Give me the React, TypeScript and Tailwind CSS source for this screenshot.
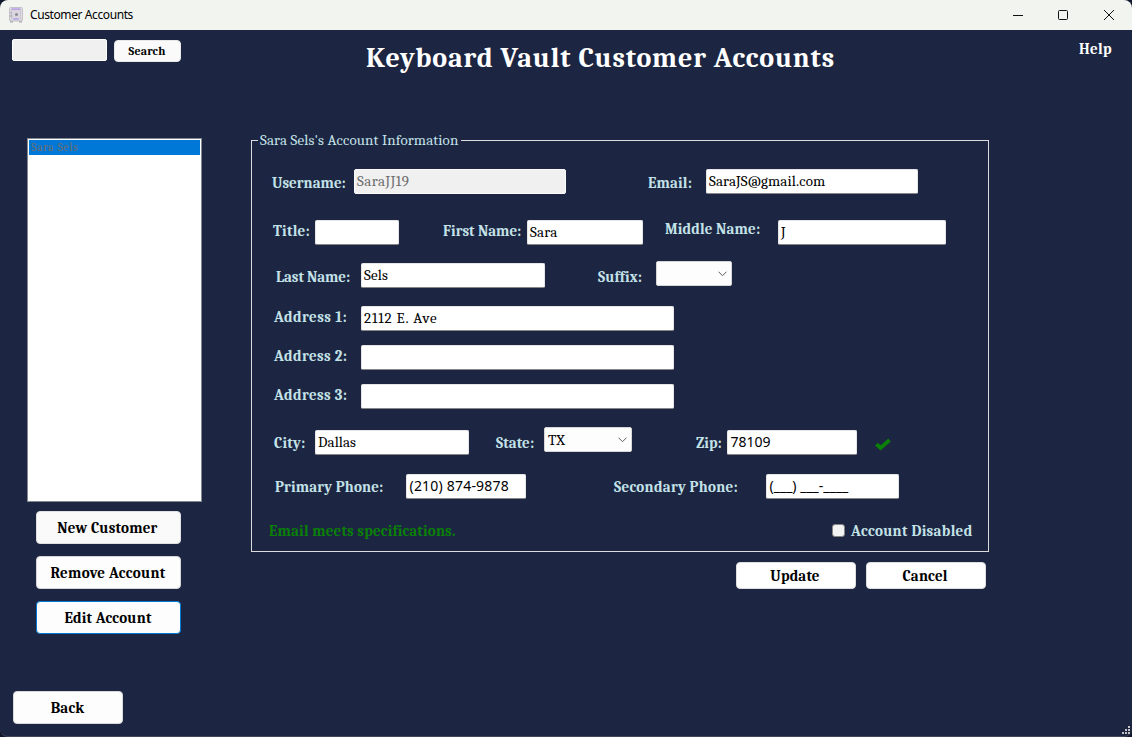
import type { ReactNode } from "react";

const Label = ({ className, children }: { className: string; children: ReactNode }) => (
  <label className={`block shrink-0 whitespace-nowrap text-[15px] leading-[21px] font-bold text-[#c3e2e8] ${className}`}>
    {children}
  </label>
);

const Box = ({
  className = "",
  disabled = false,
  masked = false,
  children,
}: {
  className?: string;
  disabled?: boolean;
  masked?: boolean;
  children?: ReactNode;
}) => (
  <div
    className={`h-[25px] shrink-0 whitespace-nowrap rounded-[2px] border ${
      disabled ? "border-[#fbfbfb] bg-[#f0f0f0] text-[#6d6d6d]" : "border-[#e6e6e6] border-b-[#868686] bg-white text-black"
    } ${
      masked ? "pl-[2.5px] font-['Noto_Sans',sans-serif] text-[14px] leading-[21px]" : "pl-[2px] text-[15px] leading-[23px]"
    } ${className}`}
  >
    {children}
  </div>
);

const Select = ({ className = "", children }: { className?: string; children?: ReactNode }) => (
  <div
    className={`flex h-[25px] shrink-0 items-center justify-between rounded-[2px] border border-[#d6d6d6] bg-[#fdfdfd] pl-[3px] pr-1 text-[15px] leading-[23px] text-black ${className}`}
  >
    <span className="pt-px">{children}</span>
    <svg width="9" height="6" viewBox="0 0 9 6" fill="none" stroke="#5c5c5c" strokeWidth="1">
      <path d="M0.5 0.7 4.5 4.7 8.5 0.7" />
    </svg>
  </div>
);

const Button = ({ className, children }: { className: string; children: ReactNode }) => (
  <button
    className={`flex shrink-0 items-center justify-center whitespace-nowrap rounded-[4px] border font-bold text-black ${className}`}
  >
    {children}
  </button>
);

export default function App() {
  return (
    <div className="h-[737px] w-[1132px] overflow-hidden bg-[#11172b]">
      <div className="flex h-[737px] flex-col overflow-hidden rounded-lg border-b border-[#44485a] bg-[#1c2541] font-['Cambria','Caladea','Liberation_Serif',serif]">
        <header className="flex h-[30px] shrink-0 items-center bg-[#f1f4ef] pl-[9px]">
          <svg width="14" height="16" viewBox="0 0 14 16">
            <rect x="1" y="13" width="3" height="2.5" fill="#aaa7ab" />
            <rect x="10" y="13" width="3" height="2.5" fill="#aaa7ab" />
            <rect x="0.5" y="0.5" width="13" height="13.5" rx="1" fill="#dedbe3" stroke="#c4c2c8" />
            <rect x="2.5" y="2.5" width="9" height="9.5" fill="#d8d5df" stroke="#cbc8d0" />
            <path d="M2.5 2h9M4.500 12h5" stroke="#a98af0" strokeWidth="1.2" />
            <circle cx="7.500" cy="7.500" r="1.500" fill="#8e8a92" />
            <path d="M2 5v1.500M2 8v2" stroke="#96929a" />
          </svg>
          <span className="ml-[7px] text-[12px] leading-4 tracking-[-0.4px] text-black font-['Noto_Sans',sans-serif]">
            Customer Accounts
          </span>
          <div className="ml-auto flex items-center pr-[18px]">
            <svg width="102" height="12" viewBox="0 0 102 12" fill="none" stroke="#111" strokeWidth="1">
              <path d="M1 6.500h10" />
              <rect x="46.500" y="1.500" width="9" height="9" rx="1" />
              <path d="M92 1l10 10M102 1 92 11" />
            </svg>
          </div>
        </header>

        <div className="flex h-[108px] shrink-0 items-start pl-3">
          <div className="mt-[9px] h-[22px] w-[95px] rounded-[2px] border border-white bg-[#f0f0f0]" />
          <Button className="mt-[10px] ml-[7px] h-[22px] w-[67px] border-[#e8e8e8] bg-[#fafafa] pr-px text-[12px] tracking-[0.15px]">
            Search
          </Button>
          <h1 className="mt-[10px] ml-[185px] w-[468px] whitespace-nowrap text-[28px] leading-9 font-bold tracking-[0.87px] text-white">
            Keyboard Vault Customer Accounts
          </h1>
          <span className="mt-[9px] ml-[245px] text-[15px] leading-[21px] font-bold tracking-[0.3px] text-white">Help</span>
        </div>

        <main className="flex shrink-0 items-start pl-[27px]">
          <aside className="flex w-[175px] shrink-0 flex-col">
            <div className="h-[364px] border border-[#828790] bg-white p-px">
              <div className="h-[15px] bg-[#0078d7] pl-[2px] text-[12px] leading-[15px] tracking-[0.5px] text-[#6d6d6d]">
                Sara Sels
              </div>
            </div>
            <Button className="mt-[9px] ml-[9px] h-[33px] w-[145px] border-[#e0e0e0] bg-[#fafafa] pt-[2px] pr-[2px] text-[15px] tracking-[0.2px]">
              New Customer
            </Button>
            <Button className="mt-3 ml-[9px] h-[33px] w-[145px] border-[#d5d5d5] bg-[#fdfdfd] pt-[2px] pr-px text-[15px] tracking-[0.3px]">
              Remove Account
            </Button>
            <Button className="mt-3 ml-[9px] h-[33px] w-[145px] border-[#0078d4] bg-[#fdfdfd] pt-[2px] pr-px text-[15px] tracking-[0.2px]">
              Edit Account
            </Button>
          </aside>

          <section className="ml-[49px] w-[738px]">
            <div className="mt-[2px] h-[412px] border border-[#dcdcdc]">
              <div className="-mt-[11px] ml-[6px] h-[39px]">
                <span className="block w-[203px] whitespace-nowrap bg-[#1c2541] pl-[2px] text-[15px] leading-5 tracking-[0.13px] text-[#c3e2e8]">
                  Sara Sels&apos;s Account Information
                </span>
              </div>
              <div className="flex h-[51px] items-start pl-5">
                <Label className="mt-1 w-[82px]">Username:</Label>
                <Box disabled className="w-[212px] tracking-[0.5px]">SaraJJ19</Box>
                <Label className="mt-1 ml-[82px] w-[58px] tracking-[0.15px]">Email:</Label>
                <Box className="w-[212px] tracking-[0.12px]">SaraJS@gmail.com</Box>
              </div>
              <div className="flex h-[41px] items-start pl-[21px]">
                <Label className="mt-px w-[42px] tracking-[0.25px]">Title:</Label>
                <Box className="w-[84px]" />
                <Label className="mt-px ml-[44px] w-[84px]">First Name:</Label>
                <Box className="w-[116px] tracking-[0.2px]">Sara</Box>
                <Label className="-mt-px ml-[22px] w-[113px] tracking-[0.15px]">Middle Name:</Label>
                <Box className="w-[168px]">J</Box>
              </div>
              <div className="flex h-[45px] items-start pl-6">
                <Label className="mt-[6px] w-[85px] tracking-[-0.08px]">Last Name:</Label>
                <Box className="mt-[2px] w-[184px] tracking-[0.2px]">Sels</Box>
                <Label className="mt-[6px] ml-[53px] w-[58px] tracking-[0.15px]">Suffix:</Label>
                <Select className="w-[76px]" />
              </div>
              <div className="flex h-[39px] items-start pl-[22px]">
                <Label className="mt-px w-[87px] tracking-[0.45px]">Address 1:</Label>
                <Box className="w-[313px] tracking-[0.85px]">2112 E. Ave</Box>
              </div>
              <div className="flex h-[39px] items-start pl-[22px]">
                <Label className="mt-px w-[87px] tracking-[0.4px]">Address 2:</Label>
                <Box className="w-[313px]" />
              </div>
              <div className="flex h-[43px] items-start pl-[22px]">
                <Label className="mt-px w-[87px] tracking-[0.4px]">Address 3:</Label>
                <Box className="w-[313px]" />
              </div>
              <div className="flex h-[47px] items-start pl-[22px]">
                <Label className="mt-[6px] w-[41px] tracking-[0.2px]">City:</Label>
                <Box className="mt-[3px] w-[154px] tracking-[0.1px]">Dallas</Box>
                <Label className="mt-[6px] ml-[27px] w-[48px] tracking-[0.1px]">State:</Label>
                <Select className="w-[88px]">TX</Select>
                <Label className="mt-[6px] ml-[64px] w-[31px]">Zip:</Label>
                <Box masked className="mt-[3px] w-[130px]">78109</Box>
                <svg className="mt-[11px] ml-[18px]" width="16" height="13" viewBox="0 0 16 13" fill="none" stroke="#0a8008" strokeWidth="3.800">
                  <path d="M1.500 6.200 5.500 10 14.600 2" />
                </svg>
              </div>
              <div className="flex h-[47px] items-start pl-[23px]">
                <Label className="mt-[3px] w-[131px] tracking-[0.15px]">Primary Phone:</Label>
                <Box masked className="w-[120px] tracking-[0.2px]">(210) 874-9878</Box>
                <Label className="mt-[3px] ml-[88px] w-[152px] tracking-[0.27px]">Secondary Phone:</Label>
                <Box masked className="w-[133px]">(___) ___-____</Box>
              </div>
              <div className="flex items-start pl-[17px]">
                <span className="w-[563px] text-[15px] leading-[21px] font-bold tracking-[0.16px] text-[#0a8008]">
                  Email meets specifications.
                </span>
                <div className="mt-[3px] h-[13px] w-[13px] rounded-[3px] border border-[#858585] bg-[#f3f3f3]" />
                <Label className="ml-[6px] tracking-[0.32px]">Account Disabled</Label>
              </div>
            </div>
            <div className="mt-[10px] flex justify-end gap-[10px] pr-[3px]">
              <Button className="h-[27px] w-[120px] border-[#dedede] bg-white pt-[2px] pr-[2px] text-[15px] tracking-[0.15px]">Update</Button>
              <Button className="h-[27px] w-[120px] border-[#dedede] bg-white pt-[2px] pr-[2px] text-[15px] tracking-[0.15px]">Cancel</Button>
            </div>
          </section>
        </main>

        <footer className="mt-auto flex shrink-0 items-end justify-between pl-[13px]">
          <Button className="mb-3 h-[33px] w-[110px] border-[#d8d8d8] bg-[#fdfdfd] pt-[2px] pr-px text-[15px] tracking-[0.15px]">Back</Button>
          <svg className="mr-[2px] mb-[2px]" width="8" height="8" viewBox="0 0 8 8" fill="#c4c4c4">
            <path d="M6 0h2v2H6zM3 3h2v2H3zM6 3h2v2H6zM0 6h2v2H0zM3 6h2v2H3zM6 6h2v2H6z" />
          </svg>
        </footer>
      </div>
    </div>
  );
}
